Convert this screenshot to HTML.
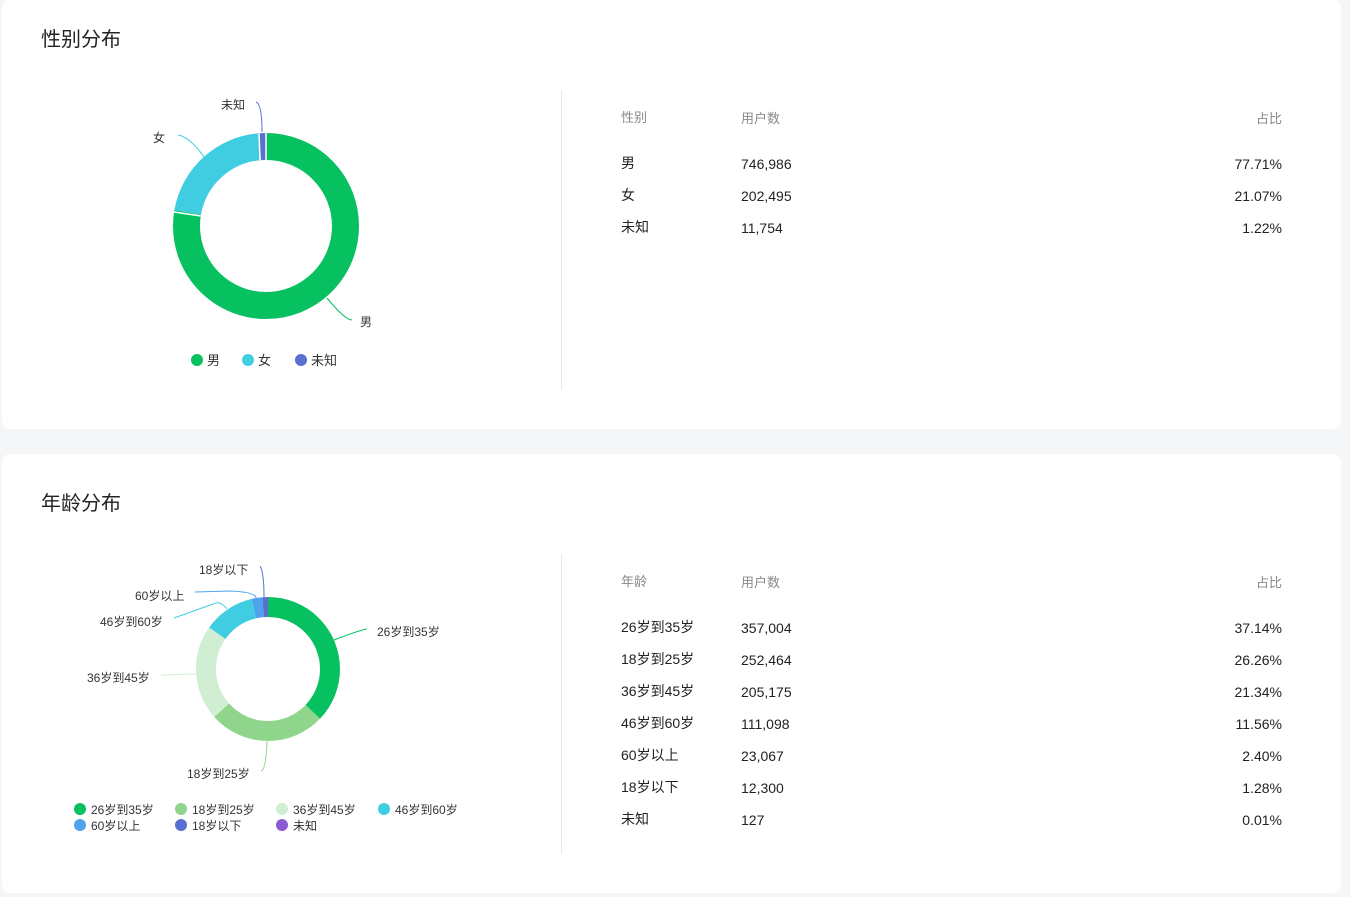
<!DOCTYPE html>
<html><head><meta charset="utf-8"><style>
body{margin:0;background:#f5f6f7;font-family:"Liberation Sans","Noto Sans CJK SC",sans-serif;width:1350px;height:897px;overflow:hidden;position:relative}
.card{position:absolute;left:2px;width:1339px;background:#fff;border-radius:8px}
.t{position:absolute;left:39px;font-size:20px;color:#222;line-height:24px}
.div{position:absolute;left:559px;width:1px;background:#e8e8e8}
.tb{position:absolute;left:619px;width:661px;font-size:14px;color:#222}
.r{position:absolute;left:0;right:0;height:20px;line-height:20px}
.r span{position:absolute;top:0}
.r .b,.r .c{top:1px}
.r .a{left:0}.r .b{left:120px}.r .c{right:0}
.h{color:#888;font-size:13px}
svg text{font-family:"Liberation Sans","Noto Sans CJK SC",sans-serif;fill:#333}
</style></head><body>
<div class="card" style="top:0;height:429px">
<div class="t" style="top:28px">性别分布</div>
<div class="div" style="top:90px;height:300px"></div>
<div class="tb" style="top:108px">
<div class="r h" style="top:0"><span class="a">性别</span><span class="b">用户数</span><span class="c">占比</span></div>
<div class="r" style="top:45px"><span class="a">男</span><span class="b">746,986</span><span class="c">77.71%</span></div>
<div class="r" style="top:77px"><span class="a">女</span><span class="b">202,495</span><span class="c">21.07%</span></div>
<div class="r" style="top:109px"><span class="a">未知</span><span class="b">11,754</span><span class="c">1.22%</span></div>
</div>
</div>
<div class="card" style="top:454px;height:439px">
<div class="t" style="top:38px">年龄分布</div>
<div class="div" style="top:100px;height:300px"></div>
<div class="tb" style="top:118px">
<div class="r h" style="top:0"><span class="a">年龄</span><span class="b">用户数</span><span class="c">占比</span></div>
<div class="r" style="top:45px"><span class="a">26岁到35岁</span><span class="b">357,004</span><span class="c">37.14%</span></div>
<div class="r" style="top:77px"><span class="a">18岁到25岁</span><span class="b">252,464</span><span class="c">26.26%</span></div>
<div class="r" style="top:109px"><span class="a">36岁到45岁</span><span class="b">205,175</span><span class="c">21.34%</span></div>
<div class="r" style="top:141px"><span class="a">46岁到60岁</span><span class="b">111,098</span><span class="c">11.56%</span></div>
<div class="r" style="top:173px"><span class="a">60岁以上</span><span class="b">23,067</span><span class="c">2.40%</span></div>
<div class="r" style="top:205px"><span class="a">18岁以下</span><span class="b">12,300</span><span class="c">1.28%</span></div>
<div class="r" style="top:237px"><span class="a">未知</span><span class="b">127</span><span class="c">0.01%</span></div>
</div>
</div>
<svg width="1350" height="897" style="position:absolute;left:0;top:0">
<g transform="translate(266,226) rotate(-90)" fill="none" stroke-width="27">
<circle r="79.5" stroke="#07c160" stroke-dasharray="388.2 1000" stroke-dashoffset="0"/>
<circle r="79.5" stroke="#40cde2" stroke-dasharray="105.2 1000" stroke-dashoffset="-388.2"/>
<circle r="79.5" stroke="#5b6fd1" stroke-dasharray="6.1 1000" stroke-dashoffset="-493.4"/>
</g>
<g stroke="#fff" stroke-width="1.5"><line x1="266" y1="133" x2="266" y2="160"/><line x1="174" y1="212" x2="201" y2="216"/><line x1="259" y1="133" x2="260" y2="160"/></g>
<g fill="none" stroke-width="1">
<path d="M327 298 Q345 320 352 320" stroke="#07c160"/>
<path d="M204 157 Q190 137 178 135" stroke="#40cde2"/>
<path d="M262 132 Q262 104 256 102" stroke="#5b6fd1"/>
</g>
<g font-size="12"><text x="360" y="326">男</text><text x="153" y="142">女</text><text x="221" y="109">未知</text></g>
<g font-size="13"><circle cx="197" cy="360" r="6" fill="#07c160"/><text x="207" y="365">男</text>
<circle cx="248" cy="360" r="6" fill="#40cde2"/><text x="258" y="365">女</text>
<circle cx="301" cy="360" r="6" fill="#5b6fd1"/><text x="311" y="365">未知</text></g>

<g transform="translate(268,669) rotate(-90)" fill="none" stroke-width="20">
<circle r="62" stroke="#07c160" stroke-dasharray="144.7 1000" stroke-dashoffset="0"/>
<circle r="62" stroke="#8fd68c" stroke-dasharray="102.3 1000" stroke-dashoffset="-144.7"/>
<circle r="62" stroke="#d0efd2" stroke-dasharray="83.1 1000" stroke-dashoffset="-247"/>
<circle r="62" stroke="#40cde2" stroke-dasharray="45 1000" stroke-dashoffset="-330.1"/>
<circle r="62" stroke="#4fa3ec" stroke-dasharray="9.4 1000" stroke-dashoffset="-375.1"/>
<circle r="62" stroke="#5b6fd1" stroke-dasharray="5 1000" stroke-dashoffset="-384.5"/>
</g>
<g fill="none" stroke-width="1">
<path d="M334 640 Q360 630 367 629" stroke="#07c160"/>
<path d="M267 741 Q266 770 261 771" stroke="#8fd68c"/>
<path d="M196 674 L161 675" stroke="#d0efd2"/>
<path d="M227 609 Q220 600 213 604 L174 618" stroke="#40cde2"/>
<path d="M256 598 Q256 592 230 591 L195 592" stroke="#4fa3ec"/>
<path d="M264 597 Q264 572 260 566" stroke="#5b6fd1"/>
</g>
<g font-size="12"><text x="377" y="636">26岁到35岁</text><text x="187" y="778">18岁到25岁</text><text x="87" y="682">36岁到45岁</text>
<text x="100" y="626">46岁到60岁</text><text x="135" y="600">60岁以上</text><text x="199" y="574">18岁以下</text></g>
<g font-size="12">
<circle cx="80" cy="809" r="6" fill="#07c160"/><text x="91" y="814">26岁到35岁</text>
<circle cx="181" cy="809" r="6" fill="#8fd68c"/><text x="192" y="814">18岁到25岁</text>
<circle cx="282" cy="809" r="6" fill="#d0efd2"/><text x="293" y="814">36岁到45岁</text>
<circle cx="384" cy="809" r="6" fill="#40cde2"/><text x="395" y="814">46岁到60岁</text>
<circle cx="80" cy="825" r="6" fill="#4fa3ec"/><text x="91" y="830">60岁以上</text>
<circle cx="181" cy="825" r="6" fill="#5b6fd1"/><text x="192" y="830">18岁以下</text>
<circle cx="282" cy="825" r="6" fill="#8b5bd1"/><text x="293" y="830">未知</text>
</g>
</svg>
</body></html>
